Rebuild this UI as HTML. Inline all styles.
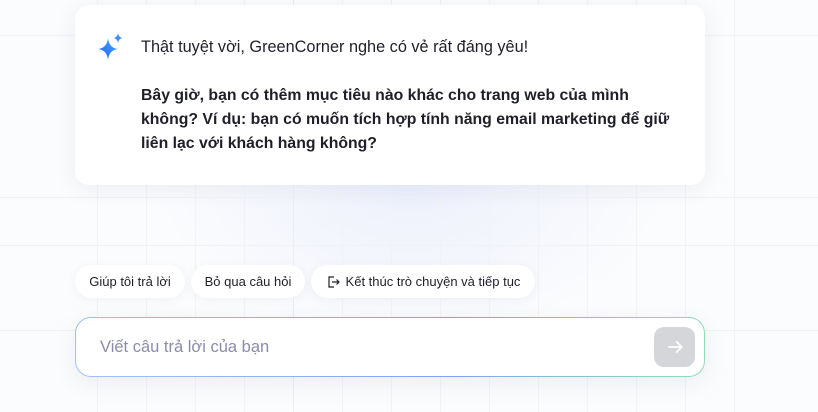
<!DOCTYPE html>
<html><head><meta charset="utf-8"><style>
*{margin:0;padding:0;box-sizing:border-box}
body{width:818px;height:412px;overflow:hidden;position:relative;font-family:"Liberation Sans","Noto Sans CJK SC",sans-serif;background:#fbfcfd}
.glow{position:absolute;left:150px;top:40px;width:520px;height:300px;background:radial-gradient(ellipse at center,rgba(228,233,252,.6),transparent 70%)}
.hl{position:absolute;left:0;width:818px;height:1px;background:#f0f2f5}
.vl{position:absolute;top:0;width:1px;height:412px;background:#f2f3f6}
.card{position:absolute;left:75px;top:5px;width:630px;height:180px;background:#fff;border-radius:14px;box-shadow:0 4px 24px rgba(60,70,120,.08)}
.t1{position:absolute;left:141px;top:38px;font-size:16.3px;color:#1f1f2a}
.t2{position:absolute;left:141px;top:84px;width:545px;font-size:15.8px;line-height:24px;font-weight:bold;color:#1f1f2a}
.chip{position:absolute;top:265px;height:33px;border-radius:17px;background:#fff;font-size:13px;color:#1f1f2a;display:flex;align-items:center;justify-content:center;box-shadow:0 2px 10px rgba(60,70,120,.06)}
.inp{position:absolute;left:75px;top:317px;width:630px;height:60px;border-radius:16px;padding:1px;background:linear-gradient(90deg,#9ec0f5,#7ea6ee 60%,#8fdcb4);box-shadow:0 6px 24px rgba(60,70,120,.08)}
.inp>div{width:100%;height:100%;background:#fff;border-radius:15px;position:relative}
.ph{position:absolute;left:24px;top:20px;font-size:16.5px;color:#8b8ca8}
.btn{position:absolute;left:578px;top:9px;width:41px;height:40px;border-radius:10px;background:#d4d6d9;display:flex;align-items:center;justify-content:center}
</style></head><body>
<div class="glow"></div>
<div class="vl" style="left:97px"></div>
<div class="vl" style="left:146px"></div>
<div class="vl" style="left:195px"></div>
<div class="vl" style="left:244px"></div>
<div class="vl" style="left:293px;background:#e3f3f2"></div>
<div class="vl" style="left:342px"></div>
<div class="vl" style="left:391px"></div>
<div class="vl" style="left:440px"></div>
<div class="vl" style="left:489px"></div>
<div class="vl" style="left:538px"></div>
<div class="vl" style="left:587px"></div>
<div class="vl" style="left:636px"></div>
<div class="vl" style="left:685px"></div>
<div class="vl" style="left:734px"></div>
<div class="hl" style="top:35px"></div>
<div class="hl" style="top:197px"></div>
<div class="hl" style="top:245px"></div>
<div class="hl" style="top:330px"></div>
<div class="card"></div>
<svg style="position:absolute;left:97px;top:32px" width="28" height="30" viewBox="0 0 28 30"><defs><linearGradient id="g" x1="0" y1="1" x2="1" y2="0"><stop offset="0" stop-color="#1a5ff0"/><stop offset="1" stop-color="#4aa8ff"/></linearGradient></defs>
<path d="M11 6 Q12 16 21 17 Q12 18 11 28 Q10 18 1 17 Q10 16 11 6Z" fill="url(#g)"/>
<path d="M21 1 Q21.6 5.4 25.5 6 Q21.6 6.6 21 11 Q20.4 6.6 16.5 6 Q20.4 5.4 21 1Z" fill="#3d8cff"/></svg>
<div class="t1">Thật tuyệt vời, GreenCorner nghe có vẻ rất đáng yêu!</div>
<div class="t2">Bây giờ, bạn có thêm mục tiêu nào khác cho trang web của mình không? Ví dụ: bạn có muốn tích hợp tính năng email marketing để giữ liên lạc với khách hàng không?</div>
<div class="chip" style="left:75px;width:110px">Giúp tôi trả lời</div>
<div class="chip" style="left:191px;width:114px">Bỏ qua câu hỏi</div>
<div class="chip" style="left:311px;width:224px"><svg width="14" height="14" viewBox="0 0 14 14" style="margin-right:6px" fill="none" stroke="#1f1f2a" stroke-width="1.2"><path d="M8 2H3v10h5M6 7h7M10.5 4.5 13 7l-2.5 2.5"/></svg>Kết thúc trò chuyện và tiếp tục</div>
<div class="inp"><div><span class="ph">Viết câu trả lời của bạn</span>
<div class="btn"><svg width="18" height="18" viewBox="0 0 16 16" fill="none" stroke="#fff" stroke-width="1.5"><path d="M2 8h12M9 3l5 5-5 5"/></svg></div></div></div>
</body></html>
